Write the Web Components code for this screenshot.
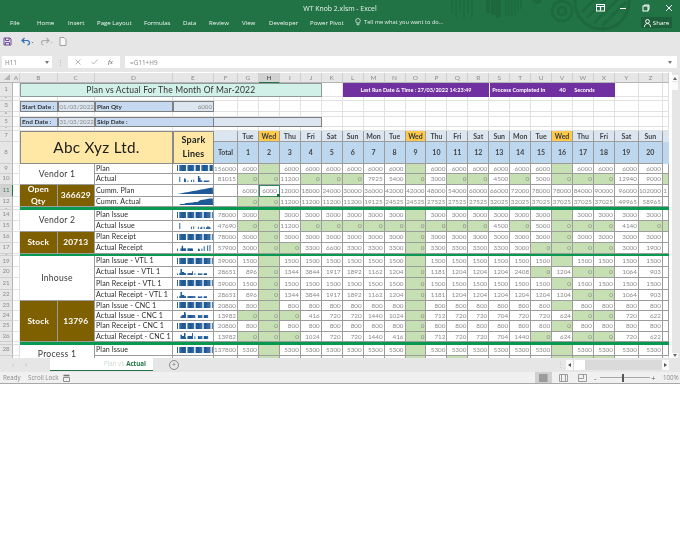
<!DOCTYPE html>
<html>
<head>
<meta charset="utf-8">
<title>WT Knob 2.xlsm - Excel</title>
<style>
  html, body { margin: 0; padding: 0; background: #fff; }
  body { font-family: "Open Sans", "Liberation Sans", sans-serif; }
</style>
</head>
<body>
<xl-window>
  <xl-titlebar slot="top" title-text="WT Knob 2.xlsm - Excel"></xl-titlebar>
  <xl-quickbar slot="top"></xl-quickbar>
  <xl-formulabar slot="top" cell="H11" formula="=G11+H9"></xl-formulabar>
  <xl-sheet></xl-sheet>
  <xl-tabbar slot="bottom"></xl-tabbar>
  <xl-statusbar slot="bottom"></xl-statusbar>
</xl-window>

<script>
// outer frame, only stacks the bars
class XlWindow extends HTMLElement {
  constructor() {
    super();
    this.attachShadow({mode: 'open'}).innerHTML = `
      <style>
        :host { display: flex; flex-direction: column; width: 680px; height: 383px; overflow: hidden;
                border-bottom: 1px solid #a8a8a8; box-sizing: content-box; filter: blur(.3px); }
      </style>
      <slot name="top"></slot><slot></slot><slot name="bottom"></slot>`;
  }
}

class XlTitlebar extends HTMLElement {
  connectedCallback() {
    const tabs = [['File',10],['Home',37],['Insert',68],['Page Layout',97],['Formulas',144],['Data',183],
                  ['Review',209],['View',242],['Developer',269],['Power Pivot',310]];
    this.attachShadow({mode: 'open'}).innerHTML = `
      <style>
        :host { display: block; position: relative; height: 32px; background: #217346; color: #fff; overflow: hidden; font-size: 6.100px; }
        .art { position: absolute; left: 440px; top: 0; }
        .title { height: 17px; display: flex; align-items: center; justify-content: center; color: #e8f1ec; font-size: 6.900px; }
        .tabs { display: flex; height: 13px; align-items: center; }
        .tabs span { position: absolute; top: 18px; color: #f2f7f4; white-space: nowrap; }
        .tell { position: absolute; left: 355px; top: 18px; display: flex; gap: 3px; align-items: center; color: #e4eee8; font-size: 5.700px; }
        .share { position: absolute; left: 641px; top: 17px; width: 31px; height: 11px; background: #1c5f3a;
                 display: flex; align-items: center; justify-content: center; gap: 2px; }
        .ctl { position: absolute; top: 4px; }
      </style>
      <svg class="art" width="210" height="32" fill="none" stroke="#1d683e">
        <path d="M12 0v14M16 0v18M20 0v12M24 0v17M28 0v14M32 0v18" stroke-width="1"/>
        <path d="M48 0v13M53 0v15" stroke-width="4"/>
        <path d="M58 0v18" stroke-width="5"/>
        <path d="M66 0v16M69 0v17M72 0v16M75 0v15M78 0v12M81 0v9" stroke-width="1.2"/>
        <circle cx="97" cy="-1" r="5" fill="#1d683e" stroke="none"/>
        <circle cx="122" cy="11" r="10" stroke-width="2.5"/>
        <circle cx="122" cy="11" r="4" stroke-width="2.5"/>
        <circle cx="162" cy="2" r="27" stroke-width="3"/>
        <path d="M142 12l24-24M147 18l28-28M154 23l28-28M162 26l24-24" stroke-width="2.5"/>
      </svg>
      <div class="title">${this.getAttribute('title-text')}</div>
      <div class="tabs">${tabs.map(t => `<span style="left:${t[1]}px">${t[0]}</span>`).join('')}</div>
      <div class="tell">
        <svg width="6" height="8" viewBox="0 0 6 8" fill="none" stroke="#eaf2ed" stroke-width=".7"><circle cx="3" cy="2.8" r="2.3"/><path d="M2 5.2v1.6h2V5.2"/></svg>
        <span>Tell me what you want to do...</span>
      </div>
      <div class="share">
        <svg width="7" height="8" viewBox="0 0 7 8" fill="none" stroke="#fff" stroke-width="1"><circle cx="3.5" cy="2.4" r="1.9"/><path d="M.5 8c0-2.4 1.4-3.4 3-3.4S6.500 5.600 6.500 8"/></svg>
        <span>Share</span>
      </div>
      <svg class="ctl" style="left:596px" width="9" height="8" viewBox="0 0 9 8" fill="none" stroke="#fff"><rect x=".5" y=".5" width="8" height="6.500"/><path d="M.5 2.500h8M4.500 2.500v4" stroke-width="1.200"/></svg>
      <svg class="ctl" style="left:619px" width="8" height="8" viewBox="0 0 8 8" stroke="#fff"><path d="M1 4.500h6"/></svg>
      <svg class="ctl" style="left:642px" width="8" height="8" viewBox="0 0 8 8" fill="none" stroke="#fff"><rect x="1" y="2" width="5" height="5"/><path d="M2.500 2V1H7v4.500H6"/></svg>
      <svg class="ctl" style="left:665px" width="8" height="8" viewBox="0 0 8 8" stroke="#fff"><path d="M1 1l6 6M7 1l-6 6"/></svg>`;
  }
}

class XlQuickbar extends HTMLElement {
  connectedCallback() {
    this.attachShadow({mode: 'open'}).innerHTML = `
      <style>
        :host { display: flex; align-items: center; height: 23px; background: #e6e6e6; padding: 0 0 5px 3px; box-sizing: border-box; }
        svg { display: block; }
      </style>
      <svg width="9" height="9" viewBox="0 0 9 9" fill="none" stroke="#6f4a9a" stroke-width="1"><path d="M1 1h6l1 1v6H1z"/><path d="M2.500 1v2.500h3.500V1M2.500 8V5.500h4V8"/></svg>
      <svg style="margin-left:9px" width="13" height="9" viewBox="0 0 13 9" fill="none"><path d="M1 3.500h5c1.800 0 2.500 1.200 2.500 2.300 0 1-.7 2-2 2.200" stroke="#2f6db5" stroke-width="1.200"/><path d="M3.500 1L1 3.500 3.500 6" stroke="#2f6db5" stroke-width="1.200"/><path d="M10.500 5h2l-1 1.200z" fill="#777"/></svg>
      <svg style="margin-left:6px" width="13" height="9" viewBox="0 0 13 9" fill="none"><path d="M9 3.500H4C2.500 3.500 1.500 4.700 1.500 5.800c0 1 .7 2 2 2.200" stroke="#a9a9a9" stroke-width="1.100"/><path d="M6.500 1L9 3.500 6.500 6" stroke="#a9a9a9" stroke-width="1.100"/><path d="M10.500 5h2l-1 1.200z" fill="#bbb"/></svg>
      <svg style="margin-left:6px" width="8" height="9" viewBox="0 0 8 9" fill="#f7f7f7" stroke="#8c8c8c" stroke-width=".8"><path d="M1 .5h4l2 2v6H1z"/></svg>`;
  }
}

class XlFormulabar extends HTMLElement {
  connectedCallback() {
    this.attachShadow({mode: 'open'}).innerHTML = `
      <style>
        :host { display: flex; align-items: stretch; height: 17px; background: #e6e6e6; padding: 1px 3px 4px 2px; box-sizing: border-box; font-size: 6.400px; color: #8a8a8a; }
        .box { background: #fff; display: flex; align-items: center; }
        .name { width: 50px; padding: 0 3px; box-sizing: border-box; justify-content: space-between; }
        .sep { width: 16px; display: flex; align-items: center; justify-content: center; color: #aaa; font-size: 7px; }
        .btns { width: 52px; justify-content: space-around; padding: 0 2px; box-sizing: border-box; color: #9a9a9a; }
        .fx { font-family: "Liberation Serif", serif; font-style: italic; color: #666; font-size: 7px; }
        .input { flex: 1; margin-left: 5px; padding: 0 5px; justify-content: space-between; }
        .caret { width: 0; height: 0; border: 2px solid transparent; border-top: 3px solid #777; border-bottom: 0; }
      </style>
      <div class="box name"><span>${this.getAttribute('cell')}</span><i class="caret"></i></div>
      <div class="sep">⋮</div>
      <div class="box btns">
        <svg width="6" height="6" viewBox="0 0 6 6" stroke="#b5b5b5"><path d="M.5.5l5 5M5.500.5l-5 5"/></svg>
        <svg width="7" height="6" viewBox="0 0 7 6" stroke="#b5b5b5" fill="none"><path d="M.5 3l2 2L6.500.5"/></svg>
        <span class="fx">fx</span>
      </div>
      <div class="box input"><span>${this.getAttribute('formula')}</span><i class="caret"></i></div>`;
  }
}

// column or area sparkline, values come in through the attribute
class XlSpark extends HTMLElement {
  connectedCallback() {
    const vals = this.getAttribute('values').split(',').map(Number);
    const type = this.getAttribute('type');
    const max = Math.max(...vals) || 1;
    const W = 36, H = type === 'area' ? 7 : 6;
    const step = W / vals.length;
    let body = '';
    if (type === 'area') {
      const pts = vals.map((v, i) => `${(i * step + 1).toFixed(1)},${(H - (v / max) * (H - .5)).toFixed(1)}`);
      body = `<polygon fill="#1f5a96" points="1,${H} ${pts.join(' ')} ${W},${H}"/>`;
    } else {
      body = vals.map((v, i) => {
        if (!v) return '';
        const h = Math.max(1.2, (v / max) * H);
        // a bit wider when a neighbour follows, so no seam shows between bars
        const w = vals[i + 1] ? step + .3 : step * .8;
        return `<rect x="${(i * step).toFixed(2)}" y="${(H - h).toFixed(2)}" width="${w.toFixed(2)}" height="${h.toFixed(2)}" fill="#1f5a96"/>`;
      }).join('');
    }
    this.attachShadow({mode: 'open'}).innerHTML = `
      <style>:host { display: block; width: ${W}px; height: ${H}px; } svg { display: block; }</style>
      <svg width="${W}" height="${H}" viewBox="0 0 ${W} ${H}">${body}</svg>`;
  }
}

const letters = ['A','B','C','D','E','F','G','H','I','J','K','L','M','N','O','P','Q','R','S','T','U','V','W','X','Y','Z',''];
const colW = [7,37.5,37.5,78,41,24].concat(Array(18).fill(20.945)).concat([24,24,6]);
// heights of sheet rows 1..29
const rowH = {1:14,2:4,3:11,4:5,5:10,6:4,7:11,8:22,9:10,10:11,11:12,12:10.500,13:2.500,14:11,15:11,16:11,17:11,18:2.500,19:10.500,20:11,21:12,22:11,23:10,24:10,25:11,26:10,27:3,28:11,29:11};
const days = ['Tue','Wed','Thu','Fri','Sat','Sun','Mon','Tue','Wed','Thu','Fri','Sat','Sun','Mon','Tue','Wed','Thu','Fri','Sat','Sun'];

// plan style rows have the same value every day, wednesdays off
const weekly = (v, wed) => days.map(d => d === 'Wed' ? wed : v);

const dataRows = [
  {r:9,  label:'Plan', total:'156000', v:weekly(6000,''), spark:'col', more:[0,6000,6000,6000,6000,6000,6000,0,6000,6000,6000]},
  {r:10, label:'Actual', total:'81015', v:[0,0,11200,0,0,0,7925,5400,0,3000,0,0,4500,0,5000,0,0,0,12940,9000], spark:'col', more:[4000,3000,0,3000,3000,3000,3000,3050,0,0,0], aa:0},
  {r:11, label:'Cumm. Plan', total:'', v:[6000,6000,12000,18000,24000,30000,36000,42000,42000,48000,54000,60000,66000,72000,78000,78000,84000,90000,96000,102000], spark:'area', more:[108000,114000,114000,120000,126000,132000,138000,144000,150000,150000,156000], aa:'1'},
  {r:12, label:'Cumm. Actual', total:'', v:[0,0,11200,11200,11200,11200,19125,24525,24525,27525,27525,27525,32025,32025,37025,37025,37025,37025,49965,58965], spark:'area', more:[62965,65965,65965,68965,71965,74965,77965,81015,81015,81015,81015]},
  {r:14, label:'Plan Issue', total:'78000', v:weekly(3000,''), spark:'col', more:[3000,3000,0,3000,3000,3000,3000,3000,3000,0,3000]},
  {r:15, label:'Actual Issue', total:'47690', v:[0,0,11200,0,0,0,0,0,0,0,0,0,4500,0,5000,0,0,0,4140,0], spark:'col', more:[3000,4500,0,4000,0,3000,5000,4000,3550,0,0], aa:0},
  {r:16, label:'Plan Receipt', total:'78000', v:weekly(3000,0), spark:'col', more:[3000,3000,0,3000,3000,3000,3000,3000,3000,0,3000]},
  {r:17, label:'Actual Receipt', total:'57900', v:[3000,0,0,3300,6600,3300,3300,3300,0,3300,3300,3300,3300,3000,0,0,0,0,3000,1900], spark:'col', more:[0,3000,0,6000,0,0,7000,0,7500,0,0]},
  {r:19, label:'Plan Issue - VTL 1', total:'39000', v:weekly(1500,''), spark:'col', more:[1500,1500,0,1500,1500,1500,1500,1500,1500,0,1500]},
  {r:20, label:'Actual Issue - VTL 1', total:'28651', v:[896,0,1344,3844,1917,1892,1162,1204,0,1181,1204,1204,1204,2408,0,1204,0,0,1064,903], spark:'col', more:[1000,1000,0,1100,1100,1100,0,0,0,0,0]},
  {r:21, label:'Plan Receipt - VTL 1', total:'39000', v:weekly(1500,0), spark:'col', more:[1500,1500,0,1500,1500,1500,1500,1500,1500,0,1500]},
  {r:22, label:'Actual Receipt - VTL 1', total:'28651', v:[896,0,1344,3844,1917,1892,1162,1204,0,1181,1204,1204,1204,1204,1204,1204,0,0,1064,903], spark:'col', more:[1000,1000,0,1100,1100,1100,0,0,0,0,0]},
  {r:23, label:'Plan Issue - CNC 1', total:'20800', v:weekly(800,''), spark:'col', more:[800,800,0,800,800,800,800,800,800,0,800]},
  {r:24, label:'Actual Issue - CNC 1', total:'13982', v:[0,0,0,416,720,720,1440,1024,0,712,720,720,704,720,720,624,0,0,720,622], spark:'col', more:[700,700,0,700,700,700,700,0,0,0,0]},
  {r:25, label:'Plan Receipt - CNC 1', total:'20800', v:weekly(800,0), spark:'col', more:[800,800,0,800,800,800,800,800,800,0,800]},
  {r:26, label:'Actual Receipt - CNC 1', total:'13982', v:[0,0,0,1024,720,720,1440,416,0,712,720,720,704,1440,0,624,0,0,720,622], spark:'col', more:[700,700,0,700,700,700,700,0,0,0,0]},
  {r:28, label:'Plan Issue', total:'137800', v:weekly(5300,''), spark:'col', more:[5300,5300,0,5300,5300,5300,5300,5300,5300,0,5300]},
];

const sheetCss = `
  :host { display: flex; height: 285.500px; background: #e6e6e6; overflow: hidden; font-family: Lato, "Liberation Sans", sans-serif; }
  .grid { display: grid; flex: none; width: 669px; background: #fff; overflow: hidden; color: #8a8a8a; }
  .grid > div { box-sizing: border-box; min-width: 0; min-height: 0; overflow: hidden; white-space: nowrap; display: flex; align-items: center; }
  .blank { border-right: 1px solid #e2e2e2; border-bottom: 1px solid #e2e2e2; }
  .ch { background: #e6e6e6; font-size: 6.500px; color: #8c8c8c; justify-content: center; border-right: 1px solid #cfcfcf; border-bottom: 1px solid #b5b5b5; margin-top: 1px; }
  .ch.on { background: #d2d2d2; color: #444; border-bottom: 1px solid #217346; }
  .rh { background: #e6e6e6; color: #8c8c8c; justify-content: center; border-right: 1px solid #b5b5b5; border-bottom: 1px solid #cfcfcf; line-height: 1; }
  .rh.on { background: #d2d2d2; color: #4d7a60; border-right: 1px solid #217346; }
  .c { border-right: 1px solid #9c9c9c; border-bottom: 1px solid #9c9c9c; background: #fff; }
  .num { justify-content: flex-end; font-size: 6.300px; padding-right: 1px; }
  .g { background: #c6e0b4; }
  .lbl { font-size: 7.100px; color: #2a2a2a; padding-left: 1px; letter-spacing: .13px; }
  .sp { justify-content: center; padding-left: 3px; }
  .merge { justify-content: center; text-align: center; white-space: normal !important; }
  .party { font-size: 8.600px; color: #3a3a3a; background: #fff; letter-spacing: .25px; }
  .low { line-height: 7px; padding-bottom: 2px; }
  .brown { background: #7f6000; color: #fff; font-weight: 700; font-size: 8.400px; line-height: 12px; letter-spacing: .15px; }
  .title { background: #d0f0e8; border: 1px solid #8e9a9a; color: #333; font-size: 8.500px; letter-spacing: .2px; }
  .run { background: #7030a0; color: #fff; font-weight: 700; font-size: 5.500px; }
  .runb { justify-content: flex-start !important; border-left: 1px solid #fff; padding-left: 2px; }
  .lb { background: #c5d9f1; color: #333; font-weight: 700; font-size: 6.400px; padding-left: 1px; border: 1px solid #7f7f7f; }
  .lv { background: #dce6f1; color: #8a8a8a; font-size: 6.200px; padding-left: 1px; border: 1px solid #7f7f7f; }
  .lo { background: #dce6f1; border-bottom: 1px solid #7f7f7f; border-top: 1px solid #7f7f7f; border-right: 1px solid #7f7f7f; }
  .logo { background: #ffe8a6; color: #1c1c1c; font-size: 15.300px; letter-spacing: .3px; border: 1px solid #8a8a8a; }
  .slh { background: #ffe8a6; color: #222; font-size: 9px; font-weight: 700; line-height: 14px; letter-spacing: .25px; border: 1px solid #8a8a8a; }
  .wk { background: #dce6f1; color: #444; font-size: 7px; font-weight: 700; justify-content: center; }
  .wk.wed { background: #ffc94a; color: #3a3a3a; }
  .dn { background: #bdd7ee; color: #444; font-size: 7px; font-weight: 700; justify-content: center; }
  .bar { background: #07994f; grid-column: 3 / -1; }
  .sel { outline: 1px solid #2f8a5a; outline-offset: -1px; position: relative; overflow: visible !important; z-index: 1; padding-right: 2px; }
  .sel::after { content: ""; position: absolute; right: -1.500px; bottom: -1.500px; width: 3px; height: 3px; background: #217346; }
  .sb { flex: none; width: 11px; position: relative; background: #e6e6e6; border-left: 3px solid #fff; box-sizing: border-box; }
  .sb i { position: absolute; left: 0; width: 6px; background: #fbfbfb; }
  .sb svg { position: absolute; left: 1px; }
`;

class XlSheet extends HTMLElement {
  connectedCallback() {
    this.used = new Set();
    let html = '';
    // column headers
    html += `<div style="grid-area:1/1;background:#e6e6e6;margin-top:1px;border-bottom:1px solid #b5b5b5;justify-content:center"><svg width="8" height="7" viewBox="0 0 8 7"><path d="M7 0v6H1z" fill="#b5b5b5"/></svg></div>`;
    letters.forEach((l, i) => {
      html += `<div class="ch ${l === 'H' ? 'on' : ''}" style="grid-area:1/${i + 2}">${l}</div>`;
    });
    // row headers, the label shrinks with the thin spacer rows; 29 is hidden under the tab strip
    for (let r = 1; r <= 29; r++) {
      const fs = Math.min(6.2, rowH[r] - .5);
      html += `<div class="rh ${r === 11 ? 'on' : ''}" style="grid-area:${r + 1}/1;font-size:${fs}px">${r < 29 ? r : ''}</div>`;
    }
    html += this.top() + this.head() + this.body();
    // whatever is left gets plain gridlines
    for (let r = 1; r <= 29; r++) {
      for (let c = 1; c <= 27; c++) {
        if (!this.used.has(r + ':' + c)) html += `<div class="blank" style="grid-area:${r + 1}/${c + 1}"></div>`;
      }
    }
    const cols = ['13px'].concat(colW.map(w => w + 'px')).join(' ');
    const rows = ['10.500px'].concat(Object.values(rowH).map(h => h + 'px')).join(' ');
    this.attachShadow({mode: 'open'}).innerHTML = `
      <style>${sheetCss}</style>
      <div class="grid" style="grid-template-columns:${cols};grid-template-rows:${rows}">${html}</div>
      <div class="sb">
        <i style="top:3px;height:6px"></i>
        <svg style="top:5px" width="4" height="3" viewBox="0 0 4 3"><path d="M2 0l2 3H0z" fill="#666"/></svg>
        <i style="top:10px;height:8px"></i>
        <i style="top:281px;height:5px"></i>
        <svg style="top:282px" width="4" height="3" viewBox="0 0 4 3"><path d="M2 3l2-3H0z" fill="#666"/></svg>
      </div>`;
  }

  // c is the sheet column number, A = 1
  cell(r, c, text, cls, rs = 1, cs = 1) {
    for (let i = 0; i < rs; i++) for (let j = 0; j < cs; j++) this.used.add((r + i) + ':' + (c + j));
    return `<div class="${cls}" style="grid-area:${r + 1}/${c + 1}/span ${rs}/span ${cs}">${text}</div>`;
  }

  top() {
    let h = '';
    h += this.cell(1, 2, 'Plan vs Actual For The Month Of Mar-2022', 'merge title', 1, 9);
    h += this.cell(1, 12, 'Last Run Date &amp; Time : 27/03/2022 14:23:49', 'merge run', 1, 7);
    h += this.cell(1, 19, '<span style="width:67px">Process Completed In</span><span style="width:15px">40</span><span>Seconds</span>', 'run runb', 1, 6);
    h += this.cell(3, 2, 'Start Date :', 'lb');
    h += this.cell(3, 3, '01/03/2022', 'lv');
    h += this.cell(3, 4, 'Plan Qty', 'lb');
    h += this.cell(3, 5, '6000', 'lv num');
    h += this.cell(5, 2, 'End Date :', 'lb');
    h += this.cell(5, 3, '31/03/2022', 'lv');
    h += this.cell(5, 4, 'Skip Date :', 'lb', 1, 2);
    h += this.cell(5, 6, '', 'lo', 1, 5);
    return h;
  }

  head() {
    let h = '';
    h += this.cell(7, 2, 'Abc Xyz Ltd.', 'merge logo', 2, 3);
    h += this.cell(7, 5, 'Spark<br>Lines', 'merge slh', 2, 1);
    h += this.cell(7, 6, '', 'c wk');
    h += this.cell(8, 6, 'Total', 'c dn');
    days.forEach((d, i) => {
      h += this.cell(7, 7 + i, d, 'c wk' + (d === 'Wed' ? ' wed' : ''));
      h += this.cell(8, 7 + i, i + 1, 'c dn');
    });
    h += this.cell(7, 27, '', 'wk');
    h += this.cell(8, 27, '', 'dn');
    return h;
  }

  body() {
    let h = '';
    h += this.cell(9, 2, 'Vendor 1', 'c merge party', 2, 2);
    h += this.cell(11, 2, 'Open Qty', 'c merge brown', 2, 1);
    h += this.cell(11, 3, '366629', 'c merge brown', 2, 1);
    h += this.cell(14, 2, 'Vendor 2', 'c merge party', 2, 2);
    h += this.cell(16, 2, 'Stock', 'c merge brown', 2, 1);
    h += this.cell(16, 3, '20713', 'c merge brown', 2, 1);
    h += this.cell(19, 2, 'Inhouse', 'c merge party', 4, 2);
    h += this.cell(23, 2, 'Stock', 'c merge brown', 4, 1);
    h += this.cell(23, 3, '13796', 'c merge brown', 4, 1);
    h += this.cell(28, 2, 'Process 1', 'c merge party low', 2, 2);
    [13, 18, 27].forEach(r => {
      h += `<div class="bar" style="grid-row:${r + 1}"></div>`;
      for (let c = 2; c <= 27; c++) this.used.add(r + ':' + c);
    });
    dataRows.forEach(row => {
      h += this.cell(row.r, 4, row.label, 'c lbl');
      const vals = row.v.map(x => x === '' ? 0 : x).concat(row.more);
      const type = row.spark === 'area' ? 'area' : 'col';
      h += this.cell(row.r, 5, `<xl-spark type="${type}" values="${vals.join(',')}"></xl-spark>`, 'c sp');
      h += this.cell(row.r, 6, row.total, 'c num');
      row.v.forEach((x, i) => {
        const zero = x === 0 || x === '';
        let cls = 'c num' + (zero ? ' g' : '');
        if (row.r === 11 && i === 1) cls += ' sel';
        h += this.cell(row.r, 7 + i, x, cls);
      });
      if (row.aa !== undefined) {
        h += this.cell(row.r, 27, row.aa === 0 ? '' : row.aa, 'c num' + (row.aa === 0 ? ' g' : ''));
      } else {
        h += this.cell(row.r, 27, '', 'c');
      }
    });
    // row 29 is only a sliver above the tab strip
    [8, 15, 17, 22, 23, 24].forEach(c => { h += this.cell(29, c, '', 'c g'); });
    for (let c = 4; c <= 26; c++) if (!this.used.has('29:' + c)) h += this.cell(29, c, '', 'c');
    return h;
  }
}

class XlTabbar extends HTMLElement {
  connectedCallback() {
    this.attachShadow({mode: 'open'}).innerHTML = `
      <style>
        :host { display: flex; align-items: center; height: 14px; background: #e6e6e6; position: relative; font-size: 6.200px; box-sizing: border-box; }
        .nav { width: 50px; display: flex; align-items: center; gap: 11px; padding-left: 12px; box-sizing: border-box; color: #b0b0b0; font-size: 7px; }
        .tab { width: 103px; height: 13px; background: #fff; border-bottom: 1px solid #217346; box-sizing: border-box; display: flex; align-items: center; justify-content: flex-end; padding-right: 7px; margin-top: -1px; color: #c8d8ce; white-space: nowrap; gap: 2px; }
        .tab b { color: #217346; font-weight: 700; }
        .plus { margin-left: 16px; width: 8px; height: 8px; border: 1px solid #8a8a8a; border-radius: 50%; display: flex; align-items: center; justify-content: center; color: #777; font-size: 7px; line-height: 1; }
        .dots { position: absolute; left: 557px; color: #bdbdbd; font-size: 7px; }
        .hs { position: absolute; left: 566px; top: 2px; width: 103px; height: 10px; background: #dadada; display: flex; justify-content: space-between; }
        .hs span { display: flex; align-items: center; }
        .btn { width: 7px; background: #fafafa; justify-content: center; }
        .th { width: 11px; background: #fff; margin-left: 1px; }
      </style>
      <div class="nav"><span>‹</span><span>›</span></div>
      <div class="tab"><span>Plan vs</span><b>Actual</b></div>
      <div class="plus">+</div>
      <div class="dots">⋮</div>
      <div class="hs">
        <span><span class="btn" style="height:10px"><svg width="3" height="4" viewBox="0 0 3 4"><path d="M0 2l3-2v4z" fill="#555"/></svg></span><span class="th" style="height:10px"></span></span>
        <span class="btn"><svg width="3" height="4" viewBox="0 0 3 4"><path d="M3 2L0 0v4z" fill="#555"/></svg></span>
      </div>`;
  }
}

class XlStatusbar extends HTMLElement {
  connectedCallback() {
    this.attachShadow({mode: 'open'}).innerHTML = `
      <style>
        :host { display: flex; align-items: center; height: 11.500px; background: #f0f0f0; position: relative; font-size: 6.200px; color: #8c8c8c; }
        span, svg, i { position: absolute; }
        .v { left: 535px; top: 0; width: 17px; height: 11.500px; background: #d0d0d0; }
        .line { left: 600px; top: 5.500px; width: 50px; height: 1px; background: #a8a8a8; }
        .knob { left: 622px; top: 2px; width: 2px; height: 8px; background: #555; }
      </style>
      <span style="left:3px">Ready</span>
      <span style="left:28px">Scroll Lock</span>
      <svg style="left:63px;top:2px" width="7" height="8" viewBox="0 0 7 8" fill="none" stroke="#777"><path d="M.5 3.500h6v4h-6z" stroke-width=".8"/><path d="M.5 1.500h6" stroke-width="1.600"/></svg>
      <i class="v"></i>
      <svg style="left:539px;top:2px" width="9" height="8" viewBox="0 0 9 8" stroke="#777" stroke-width=".7"><path d="M0 1h9M0 3h9M0 5h9M0 7h9M1 0v8M3 0v8M5 0v8M7 0v8"/></svg>
      <svg style="left:559px;top:2px" width="9" height="8" viewBox="0 0 9 8" fill="none" stroke="#888" stroke-width=".8"><path d="M.5.5h8v7h-8zM2.500.5v7M6.500.5v7"/></svg>
      <svg style="left:578px;top:2px" width="9" height="8" viewBox="0 0 9 8" fill="none" stroke="#888" stroke-width=".8"><path d="M.5.5h8v7h-8zM.5 4.500h5v-4"/></svg>
      <span style="left:594px;font-size:8px;color:#666">-</span>
      <i class="line"></i><i class="knob"></i>
      <span style="left:651px;font-size:8px;color:#666">+</span>
      <span style="left:663px">100%</span>`;
  }
}

customElements.define('xl-spark', XlSpark);
customElements.define('xl-window', XlWindow);
customElements.define('xl-titlebar', XlTitlebar);
customElements.define('xl-quickbar', XlQuickbar);
customElements.define('xl-formulabar', XlFormulabar);
customElements.define('xl-sheet', XlSheet);
customElements.define('xl-tabbar', XlTabbar);
customElements.define('xl-statusbar', XlStatusbar);
</script>
</body>
</html>
